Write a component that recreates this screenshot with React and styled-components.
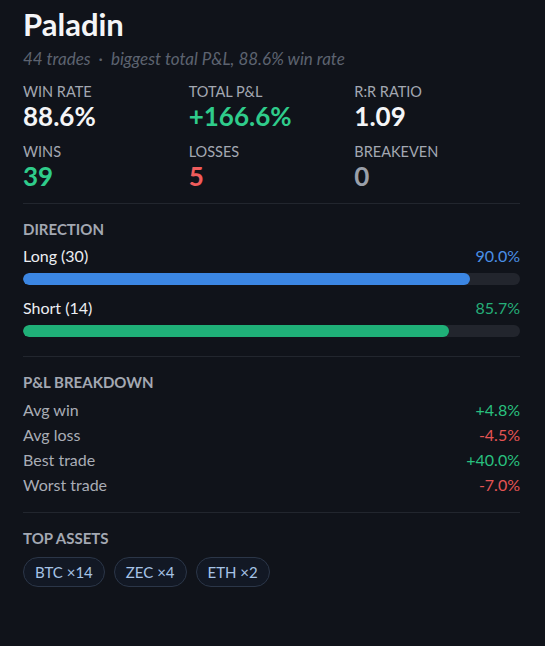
import React from 'react';
import styled, { createGlobalStyle } from 'styled-components';

const GlobalStyle = createGlobalStyle`
  html, body {
    margin: 0;
    padding: 0;
    background: #10131a;
  }
  body {
    font-family: Lato, 'Noto Sans', sans-serif;
    color: #e8eaee;
  }
`;

const Panel = styled.div`
  background: #10131a;
  min-height: 646px;
  padding: 6px 25px 0 23px;
  box-sizing: border-box;
`;

const Title = styled.h1`
  margin: 0;
  font-size: 31px;
  font-weight: 700;
  line-height: 36px;
  color: #f4f5f7;
`;

const Subtitle = styled.div`
  margin-top: 6px;
  font-size: 17px;
  font-style: italic;
  line-height: 22px;
  color: #5d6370;
  span { margin: 0 8px; }
`;

const StatGrid = styled.div`
  display: grid;
  grid-template-columns: repeat(3, 1fr);
  row-gap: 12px;
  margin-top: 13px;
  padding-bottom: 12px;
  border-bottom: 1px solid #22262e;
`;

const Stat = styled.div`
  display: flex;
  flex-direction: column;
`;

const Label = styled.div`
  font-size: 14.5px;
  line-height: 18px;
  text-transform: uppercase;
  color: #a3a8b2;
`;

const Value = styled.div`
  font-size: 26px;
  font-weight: 700;
  line-height: 30px;
  color: ${(p) => p.color || '#f4f5f7'};
`;

const Section = styled.div`
  padding: 16px 0 ${(p) => p.bottom}px;
  border-bottom: ${(p) => (p.last ? 'none' : '1px solid #22262e')};
`;

const SectionTitle = styled.div`
  font-size: 15px;
  font-weight: 700;
  line-height: 18px;
  text-transform: uppercase;
  color: #a3a8b2;
  margin-bottom: ${(p) => p.gap}px;
`;

const BarRow = styled.div`
  & + & { margin-top: 13px; }
`;

const BarHead = styled.div`
  display: flex;
  justify-content: space-between;
  font-size: 16px;
  line-height: 20px;
  color: #eceef2;
  b {
    font-weight: 400;
    color: ${(p) => p.accent};
  }
`;

const Track = styled.div`
  margin-top: 7px;
  height: 12px;
  border-radius: 6px;
  background: #22252d;
  overflow: hidden;
`;

const Fill = styled.div`
  height: 100%;
  border-radius: 6px;
  background: ${(p) => p.color};
`;

const Line = styled.div`
  display: flex;
  justify-content: space-between;
  font-size: 16px;
  line-height: 25px;
  color: #a9adb6;
  b {
    font-weight: 400;
    color: ${(p) => p.color};
  }
`;

const Chips = styled.div`
  display: flex;
  gap: 9px;
`;

const Chip = styled.div`
  height: 30px;
  box-sizing: border-box;
  padding: 0 11px;
  border-radius: 15px;
  border: 1px solid #2b3648;
  background: #121824;
  color: #a6c3e6;
  font-size: 15px;
  display: flex;
  align-items: center;
`;

const GREEN = '#2fcc8b';
const RED = '#f05c5c';

const directions = [
  { label: 'Long (30)', pct: 90.0, accent: '#4a8fe6', color: '#3b86e3' },
  { label: 'Short (14)', pct: 85.7, accent: '#25ae78', color: '#1fb078' },
];

const breakdown = [
  { label: 'Avg win', value: '+4.8%', color: '#29c07f' },
  { label: 'Avg loss', value: '-4.5%', color: '#e55454' },
  { label: 'Best trade', value: '+40.0%', color: '#29c07f' },
  { label: 'Worst trade', value: '-7.0%', color: '#e55454' },
];

const assets = ['BTC ×14', 'ZEC ×4', 'ETH ×2'];

export default function App() {
  return (
    <Panel>
      <GlobalStyle />
      <Title>Paladin</Title>
      <Subtitle>
        44 trades<span>·</span>biggest total P&amp;L, 88.6% win rate
      </Subtitle>

      <StatGrid>
        <Stat><Label>Win rate</Label><Value>88.6%</Value></Stat>
        <Stat><Label>Total P&amp;L</Label><Value color={GREEN}>+166.6%</Value></Stat>
        <Stat><Label>R:R ratio</Label><Value>1.09</Value></Stat>
        <Stat><Label>Wins</Label><Value color={GREEN}>39</Value></Stat>
        <Stat><Label>Losses</Label><Value color={RED}>5</Value></Stat>
        <Stat><Label>Breakeven</Label><Value color="#9aa0aa">0</Value></Stat>
      </StatGrid>

      <Section bottom={19}>
        <SectionTitle gap={8}>Direction</SectionTitle>
        {directions.map((d) => (
          <BarRow key={d.label}>
            <BarHead accent={d.accent}>
              <span>{d.label}</span>
              <b>{d.pct.toFixed(1)}%</b>
            </BarHead>
            <Track>
              <Fill color={d.color} style={{ width: `${d.pct}%` }} />
            </Track>
          </BarRow>
        ))}
      </Section>

      <Section bottom={15}>
        <SectionTitle gap={6}>P&amp;L breakdown</SectionTitle>
        {breakdown.map((r) => (
          <Line key={r.label} color={r.color}>
            <span>{r.label}</span>
            <b>{r.value}</b>
          </Line>
        ))}
      </Section>

      <Section last bottom={0}>
        <SectionTitle gap={10}>Top assets</SectionTitle>
        <Chips>
          {assets.map((a) => (
            <Chip key={a}>{a}</Chip>
          ))}
        </Chips>
      </Section>
    </Panel>
  );
}
